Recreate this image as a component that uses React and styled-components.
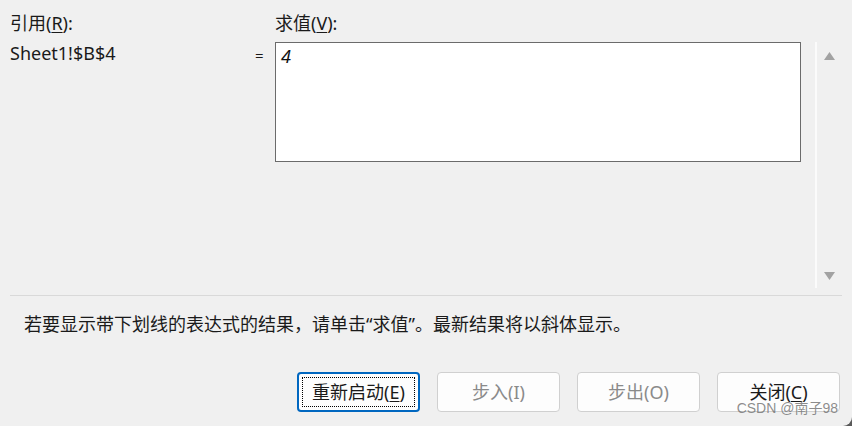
import React from "react";
import styled, { createGlobalStyle } from "styled-components";

const Global = createGlobalStyle`
  html, body { margin: 0; padding: 0; background: #5a5a5a; }
  body { width: 852px; height: 426px; overflow: hidden; }
  #root { width: 852px; height: 426px; }
`;

const FONT = `"Noto Sans", "Noto Sans CJK SC", sans-serif`;

const Window = styled.div`
  position: relative;
  width: 852px;
  height: 426px;
  box-sizing: border-box;
  background: #f0f0f0;
  border-bottom-right-radius: 9px;
  padding: 11px 10px 0 10px;
  font-family: ${FONT};
  font-size: 18px;
  color: #1a1a1a;
  display: flex;
  flex-direction: column;
`;

const LabelRow = styled.div`
  display: flex;
  height: 24px;
  line-height: 24px;
`;

const Label = styled.div`
  width: ${(p) => p.$w || "auto"};
`;

const U = styled.span`
  text-decoration: underline;
  text-underline-offset: 2px;
  text-decoration-thickness: 1px;
`;

const BodyRow = styled.div`
  display: flex;
  margin-top: 7px;
  height: 246px;
`;

const RefValue = styled.div`
  width: 238px;
  line-height: 22px;
`;

const Eq = styled.div`
  width: 27px;
  line-height: 22px;
  padding-top: 2px;
  font-size: 15px;
  text-align: left;
  padding-left: 7px;
  box-sizing: border-box;
`;

const ValueBox = styled.div`
  width: 526px;
  height: 120px;
  box-sizing: border-box;
  border: 1px solid #6b6b6b;
  background: #ffffff;
  padding: 2px 5px;
  font-style: italic;
  color: #111111;
  line-height: 22px;
  font-size: 18px;
`;

const Scroll = styled.div`
  flex: 1;
  display: flex;
  padding-left: 14px;
`;

const ScrollLine = styled.div`
  width: 2px;
  background: #fbfbfb;
  height: 246px;
`;

const ArrowCol = styled.div`
  flex: 1;
  display: flex;
  flex-direction: column;
  justify-content: space-between;
  align-items: center;
  padding: 10px 0 8px 0;
`;

const Arrow = ({ down }) => (
  <svg width="11" height="8" viewBox="0 0 11 8">
    <path d={down ? "M0 0 H11 L5.5 8 Z" : "M0 8 H11 L5.5 0 Z"} fill="#a2a2a2" />
  </svg>
);

const Separator = styled.div`
  margin-top: 7px;
  height: 1px;
  background: #d9d9d9;
`;

const Description = styled.div`
  margin-top: 16px;
  padding-left: 14px;
  line-height: 24px;
`;

const ButtonRow = styled.div`
  display: flex;
  justify-content: flex-end;
  gap: 17px;
  margin-top: 36px;
  padding-right: 2px;
`;

const Button = styled.div`
  position: relative;
  width: 123px;
  height: 40px;
  box-sizing: border-box;
  border-radius: 4px;
  background: #fdfdfd;
  border: ${(p) => (p.$focus ? "2px solid #0067c0" : "1px solid #d0d0d0")};
  color: ${(p) => (p.$disabled ? "#8a8a8a" : "#1a1a1a")};
  display: flex;
  align-items: center;
  justify-content: center;
  line-height: 22px;
`;

const FocusRing = styled.div`
  position: absolute;
  inset: 3px;
  border: 1px dotted #000;
`;

const Watermark = styled.div`
  position: absolute;
  right: 14px;
  bottom: 10px;
  font-family: "Liberation Sans", "Noto Sans CJK SC", sans-serif;
  font-size: 14px;
  color: rgba(120, 120, 120, 0.85);
  line-height: 16px;
  white-space: nowrap;
`;

export default function App() {
  return (
    <>
      <Global />
      <Window>
        <LabelRow>
          <Label $w="265px">
            引用(<U>R</U>):
          </Label>
          <Label>
            求值(<U>V</U>):
          </Label>
        </LabelRow>
        <BodyRow>
          <RefValue>Sheet1!$B$4</RefValue>
          <Eq>=</Eq>
          <ValueBox>4</ValueBox>
          <Scroll>
            <ScrollLine />
            <ArrowCol>
              <Arrow />
              <Arrow down />
            </ArrowCol>
          </Scroll>
        </BodyRow>
        <Separator />
        <Description>
          若要显示带下划线的表达式的结果，请单击“求值”。最新结果将以斜体显示。
        </Description>
        <ButtonRow>
          <Button $focus>
            <FocusRing />
            重新启动(<U>E</U>)
          </Button>
          <Button $disabled>步入(I)</Button>
          <Button $disabled>步出(O)</Button>
          <Button>
            关闭(<U>C</U>)
          </Button>
        </ButtonRow>
        <Watermark>CSDN @南子98</Watermark>
      </Window>
    </>
  );
}
